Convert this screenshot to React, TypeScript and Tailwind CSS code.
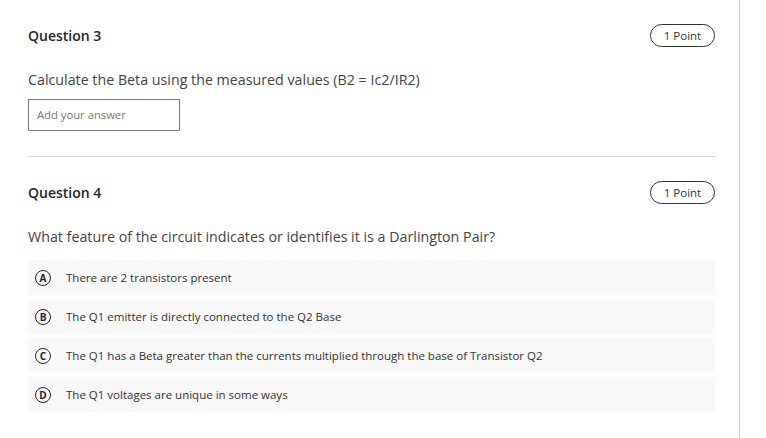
import React from "react";

const Badge = () => (
  <div className="h-[23px] w-[65px] rounded-full border border-[#333] flex items-center justify-center text-[11.5px] text-[#333]">
    1 Point
  </div>
);

const options = [
  { l: "A", t: "There are 2 transistors present" },
  { l: "B", t: "The Q1 emitter is directly connected to the Q2 Base" },
  { l: "C", t: "The Q1 has a Beta greater than the currents multiplied through the base of Transistor Q2" },
  { l: "D", t: "The Q1 voltages are unique in some ways" },
];

export default function App() {
  return (
    <div
      className="w-[766px] h-[438px] bg-white flex overflow-hidden"
      style={{ fontFamily: '"Open Sans", "Noto Sans", sans-serif' }}
    >
      <div className="w-[740px] border-r border-[#d0d0d0] pl-[28px] pr-[24px] pt-[24px] flex flex-col">
        <div className="flex items-center justify-between h-[23px]">
          <div className="text-[14px] font-semibold text-[#262626]">Question 3</div>
          <Badge />
        </div>
        <div className="mt-[23px] text-[14.25px] text-[#444] leading-[19px]">
          Calculate the Beta using the measured values (B2 = Ic2/IR2)
        </div>
        <div className="mt-[10px] w-[152px] h-[32px] border border-[#7a7a7a] flex items-center pl-[8px] text-[11.25px] text-[#777]">
          Add your answer
        </div>
        <div className="mt-[25px] h-px bg-[#d9d9d9]" />
        <div className="mt-[24px] flex items-center justify-between h-[23px]">
          <div className="text-[14px] font-semibold text-[#262626]">Question 4</div>
          <Badge />
        </div>
        <div className="mt-[23px] text-[14.25px] text-[#444] leading-[19px]">
          What feature of the circuit indicates or identifies it is a Darlington Pair?
        </div>
        <div className="mt-[14px] flex flex-col gap-[4px]">
          {options.map((o) => (
            <div key={o.l} className="h-[35px] bg-[#f8f8f8] flex items-center pl-[7px]">
              <div className="w-[16px] h-[16px] shrink-0 rounded-full border-[1.5px] border-[#262626] flex items-center justify-center text-[10px] leading-none font-bold text-[#262626]">
                {o.l}
              </div>
              <div className="ml-[15px] text-[11.5px] text-[#333]">{o.t}</div>
            </div>
          ))}
        </div>
      </div>
    </div>
  );
}
